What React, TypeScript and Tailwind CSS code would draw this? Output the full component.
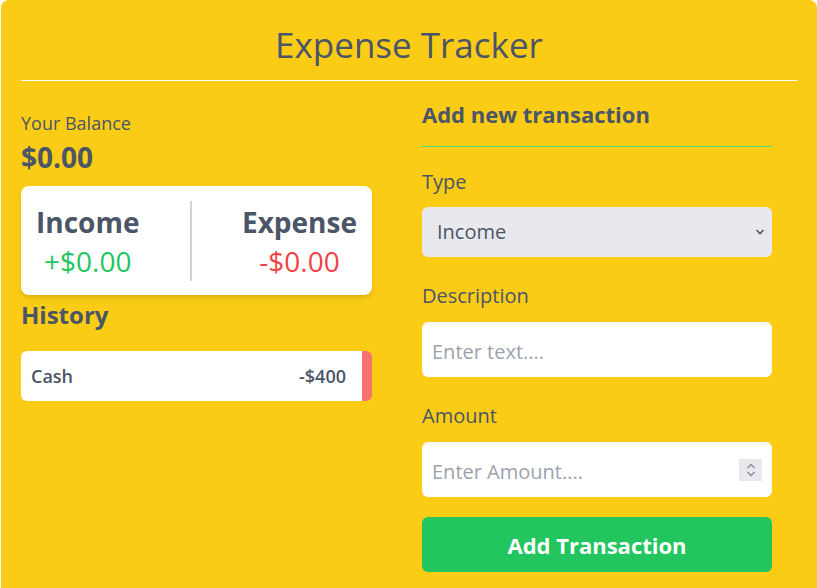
const font = { fontFamily: '"Open Sans", "Noto Sans", sans-serif' };

const Balance = () => {
  return (
    <div className="flex flex-col">
      <p className="mt-[2px] text-lg leading-7 text-[#4a5568]">Your Balance</p>
      <h2 className="mt-[2px] text-[28px] leading-9 font-bold text-[#4a5568]">$0.00</h2>
    </div>
  );
};

const IncomeExpense = () => {
  return (
    <div className="mt-[11px] flex items-center justify-between rounded-lg bg-white px-[15px] pt-[15px] pb-[14px] shadow-md">
      <div className="flex flex-col items-center">
        <h4 className="text-[28px] leading-9 font-bold text-[#4a5568]">Income</h4>
        <p className="mt-[3px] text-[28px] leading-9 text-[#22c55e]">+$0.00</p>
      </div>
      <div className="h-[80px] w-[2px] bg-[#cbd5e1]" />
      <div className="flex flex-col items-center">
        <h4 className="text-[28px] leading-9 font-bold text-[#4a5568]">Expense</h4>
        <p className="mt-[3px] text-[28px] leading-9 text-[#ef4444]">-$0.00</p>
      </div>
    </div>
  );
};

const History = () => {
  return (
    <div className="flex flex-col">
      <h3 className="mt-[4px] text-2xl leading-8 font-bold text-[#4a5568]">History</h3>
      <ul className="mt-[20px]">
        <li className="flex h-[50px] items-center justify-between rounded-md border-r-[10px] border-[#f87171] bg-white px-[10px] text-lg font-semibold text-[#4a5568]">
          <span>Cash</span>
          <span className="mr-[6px]">-$400</span>
        </li>
      </ul>
    </div>
  );
};

const Spinner = () => {
  return (
    <div className="absolute right-[10px] top-[17px] flex h-[22px] w-[23px] flex-col items-center justify-center bg-[#e9e9ed]">
      <svg width="10" height="16" viewBox="0 0 10 16" fill="none" stroke="#8b8b99" strokeWidth="1.4">
        <path d="M1.5 6 L5 2.5 L8.5 6" />
        <path d="M1.5 10 L5 13.5 L8.5 10" />
      </svg>
    </div>
  );
};

const AddTransaction = () => {
  return (
    <div className="flex flex-col">
      <h3 className="mt-[2px] text-[22px] leading-8 font-bold text-[#4a5568]">Add new transaction</h3>
      <div className="mt-[16px] h-px bg-[#4ade80]" />
      <label className="mt-[21px] text-xl leading-7 text-[#4a5568]">Type</label>
      <div className="relative mt-[11px]">
        <select
          className="h-[50px] w-full appearance-none rounded-md bg-[#e9e9ed] pl-[15px] text-xl text-[#4a5568] outline-none"
          style={font}
          defaultValue="income"
        >
          <option value="income">Income</option>
          <option value="expense">Expense</option>
        </select>
        <svg
          className="pointer-events-none absolute right-[7px] top-[21px]"
          width="10"
          height="8"
          viewBox="0 0 10 8"
          fill="none"
          stroke="#4a5568"
          strokeWidth="1.6"
        >
          <path d="M1.5 2 L5 5.5 L8.5 2" />
        </svg>
      </div>
      <label className="mt-[25px] text-xl leading-7 text-[#4a5568]">Description</label>
      <input
        type="text"
        placeholder="Enter text...."
        className="mt-[12px] h-[55px] w-full rounded-md bg-white px-[10px] pt-[3px] text-xl text-[#4a5568] shadow-inner outline-none placeholder:text-[#9ca3af]"
        style={font}
      />
      <label className="mt-[25px] text-xl leading-7 text-[#4a5568]">Amount</label>
      <div className="relative mt-[12px]">
        <input
          type="text"
          placeholder="Enter Amount...."
          className="h-[55px] w-full rounded-md bg-white px-[10px] pt-[3px] text-xl text-[#4a5568] shadow-inner outline-none placeholder:text-[#9ca3af]"
          style={font}
        />
        <Spinner />
      </div>
      <button
        className="mt-5 h-[55px] w-full rounded-md bg-[#22c55e] pt-[2px] text-[22px] font-bold text-white"
        style={font}
      >
        Add Transaction
      </button>
    </div>
  );
};

const App = () => {
  return (
    <div className="min-h-screen bg-white pl-[1px]" style={font}>
      <div className="min-h-[588px] rounded-t-lg bg-[#facc15] px-5">
        <h1 className="pt-[25px] text-center text-[35px] leading-10 text-[#4a5568]">Expense Tracker</h1>
        <div className="mt-[15px] h-px bg-white" />
        <div className="flex items-start">
          <div className="flex w-[351px] flex-col pt-[26px]">
            <Balance />
            <IncomeExpense />
            <History />
          </div>
          <div className="ml-[50px] w-[350px] pt-[15px]">
            <AddTransaction />
          </div>
        </div>
      </div>
    </div>
  );
};

export default App;
